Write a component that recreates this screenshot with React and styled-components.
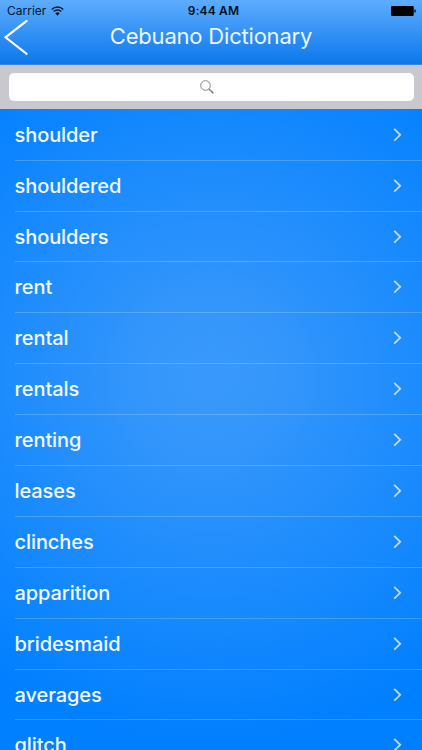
import React, { useState } from "react";
import styled, { createGlobalStyle } from "styled-components";

const GlobalStyle = createGlobalStyle`
  body {
    margin: 0;
    overflow: hidden;
    font-family: Inter, "Liberation Sans", sans-serif;
  }
`;

const Screen = styled.div`
  display: flex;
  flex-direction: column;
  height: 750px;
  overflow: hidden;
  background: radial-gradient(
    circle 375px at 50% 50%,
    #3999fb,
    #3697fb 15%,
    #007fff
  );
`;

const Header = styled.header`
  box-sizing: border-box;
  flex: none;
  height: 65px;
  background: linear-gradient(#5eacff, #0b78ea);
  border-bottom: 1px solid #3f86d6;
`;

const StatusBar = styled.div`
  display: grid;
  grid-template-columns: 1fr auto 1fr;
  align-items: center;
  box-sizing: border-box;
  height: 19px;
  padding: 3px 6px 0 7px;
  color: #06182c;
  font-size: 12px;
  line-height: 16px;
`;

const Carrier = styled.div`
  display: flex;
  align-items: center;
  gap: 5px;
`;

const Clock = styled.div`
  padding-left: 4px;
  color: #04101e;
  font-weight: 600;
  letter-spacing: 0.15px;
`;

const BatteryIcon = styled.svg`
  justify-self: end;
`;

const TitleBar = styled.div`
  display: grid;
  grid-template-columns: 40px 1fr 40px;
  height: 40px;
`;

const BackButton = styled.button`
  padding: 0;
  border: none;
  background: none;
  cursor: pointer;

  svg {
    display: block;
  }
`;

const Title = styled.h1`
  margin: 0;
  color: #ecf6ff;
  font-size: 22px;
  font-weight: 400;
  letter-spacing: -0.2px;
  line-height: 34px;
  text-align: center;
  white-space: nowrap;
`;

const SearchBar = styled.div`
  box-sizing: border-box;
  flex: none;
  height: 44.3px;
  padding: 8px 8.5px;
  background: #c8c8ce;
`;

const SearchField = styled.label`
  display: flex;
  align-items: center;
  justify-content: center;
  height: 28.3px;
  border-radius: 5px;
  background: #fff;
`;

const SearchInput = styled.input`
  width: 8px;
  padding: 0;
  border: none;
  outline: none;
  background: none;
  font: inherit;
  font-size: 15px;
`;

const WordList = styled.ul`
  flex: 1;
  margin: 0;
  padding: 0.5px 0 0;
  overflow: hidden;
  list-style: none;
`;

const WordRow = styled.li`
  display: flex;
  align-items: center;
  justify-content: space-between;
  box-sizing: border-box;
  height: 50.9px;
  margin-left: 14.5px;
  padding-right: 20px;
  border-bottom: 1px solid rgba(255, 255, 255, 0.2);
  color: #f2faff;
  font-size: 20px;
  font-weight: 540;
  letter-spacing: -0.08px;
`;

const words = [
  "shoulder",
  "shouldered",
  "shoulders",
  "rent",
  "rental",
  "rentals",
  "renting",
  "leases",
  "clinches",
  "apparition",
  "bridesmaid",
  "averages",
  "glitch",
];

const App = () => {
  const [search, setSearch] = useState("");

  return (
    <Screen>
      <GlobalStyle />
      <Header>
        <StatusBar>
          <Carrier>
            Carrier
            <svg width="13" height="10" viewBox="0 0 13 10" fill="none" stroke="#06182c">
              <path d="M0.7 3.5a8.2 8.2 0 0 1 11.6 0" strokeWidth="1.5" />
              <path d="M2.7 5.6a5.4 5.4 0 0 1 7.6 0" strokeWidth="1.4" />
              <path d="M6.5 9.7 4.3 7.3a3.1 3.1 0 0 1 4.4 0Z" fill="#06182c" stroke="none" />
            </svg>
          </Carrier>
          <Clock>9:44 AM</Clock>
          <BatteryIcon width="25" height="10" viewBox="0 0 25 10">
            <rect x="0" y="0" width="22.7" height="10" rx="1" fill="#000" />
            <path d="M23.4 3.2q1.4 0.3 1.4 1.8t-1.4 1.8Z" fill="#000" />
          </BatteryIcon>
        </StatusBar>
        <TitleBar>
          <BackButton aria-label="Back">
            <svg width="32" height="38" viewBox="0 0 32 38" fill="none" stroke="#fff" strokeWidth="2.1">
              <path d="M27.3 0.3 5.5 17.3 27.3 34.3" />
            </svg>
          </BackButton>
          <Title>Cebuano Dictionary</Title>
        </TitleBar>
      </Header>
      <SearchBar>
        <SearchField>
          <svg width="14" height="14" viewBox="0 0 14 14" fill="none" stroke="#858589">
            <circle cx="5.5" cy="5.5" r="4.8" strokeWidth="1" />
            <path d="m9 9 4.4 4.4" strokeWidth="1.5" />
          </svg>
          <SearchInput
            type="text"
            aria-label="Search"
            value={search}
            onChange={(e) => setSearch(e.target.value)}
          />
        </SearchField>
      </SearchBar>
      <WordList>
        {words
          .filter((word) => word.includes(search))
          .map((word) => (
            <WordRow key={word}>
              {word}
              <svg width="9" height="14" viewBox="0 0 9 14" fill="none" stroke="#c5d9f2" strokeWidth="1.8">
                <path d="m1.2 0.9 6 5.9-6 5.9" />
              </svg>
            </WordRow>
          ))}
      </WordList>
    </Screen>
  );
};

export default App;
